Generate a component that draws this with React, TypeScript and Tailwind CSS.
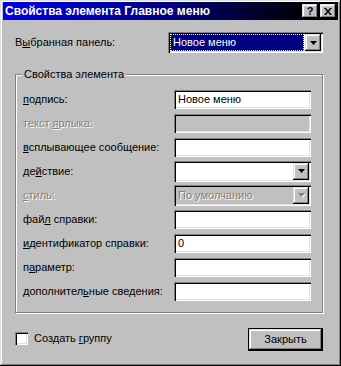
import React from 'react';

const raised = 'shadow-[inset_-1px_-1px_#000,inset_1px_1px_#dfdfdf,inset_-2px_-2px_#808080,inset_2px_2px_#fff]';
const sunken = 'shadow-[inset_1px_1px_#808080,inset_2px_2px_#000,inset_-1px_-1px_#fff,inset_-2px_-2px_#dfdfdf]';
const font = { fontFamily: '"Liberation Sans", Arial, sans-serif' };

interface LabelProps {
    pre: string;
    u: string;
    post: string;
    disabled?: boolean;
}

function Label({ pre, u, post, disabled }: LabelProps) {
    return (
        <span className={`whitespace-pre text-[11px] leading-[13px] ${disabled ? 'text-[#808080] [text-shadow:1px_1px_0_#fff]' : 'text-black'}`}>
            {pre}<u className="underline-offset-[1px]">{u}</u>{post}
        </span>
    );
}

function Arrow({ disabled }: { disabled?: boolean }) {
    return (
        <svg width="7" height="4" viewBox="0 0 7 4" className={disabled ? 'drop-shadow-[1px_1px_0_#fff]' : ''}>
            <path d="M0 0h7L3.5 4z" fill={disabled ? '#808080' : '#000'} />
        </svg>
    );
}

function DropButton({ disabled }: { disabled?: boolean }) {
    return (
        <div className={`w-[16px] h-full bg-[#c0c0c0] flex items-center justify-center ${raised}`}>
            <Arrow disabled={disabled} />
        </div>
    );
}

type Row = {
    pre: string;
    u: string;
    post: string;
    disabled?: boolean;
    combo?: boolean;
    value?: string;
};

const rows: Row[] = [
    { pre: '', u: 'п', post: 'одпись:', value: 'Новое меню' },
    { pre: 'текст ', u: 'я', post: 'рлыка:', disabled: true },
    { pre: '', u: 'в', post: 'сплывающее сообщение:' },
    { pre: 'де', u: 'й', post: 'ствие:', combo: true },
    { pre: '', u: 'с', post: 'тиль:', disabled: true, combo: true, value: 'По умолчанию' },
    { pre: 'фай', u: 'л', post: ' справки:' },
    { pre: '', u: 'и', post: 'дентификатор справки:', value: '0' },
    { pre: 'п', u: 'а', post: 'раметр:' },
    { pre: 'дополнител', u: 'ь', post: 'ные сведения:' },
];

function Field({ row }: { row: Row }) {
    if (row.combo) {
        return (
            <div className={`w-[137px] h-[21px] p-[2px] flex ${sunken} ${row.disabled ? 'bg-[#c0c0c0]' : 'bg-white'}`}>
                <div className={`flex-1 pl-[2px] flex items-center text-[11px] ${row.disabled ? 'text-[#808080] [text-shadow:1px_1px_0_#fff]' : 'text-black'}`}>
                    {row.value}
                </div>
                <DropButton disabled={row.disabled} />
            </div>
        );
    }
    return (
        <div className={`w-[137px] h-[19px] px-[4px] flex items-center text-[11px] text-black ${sunken} ${row.disabled ? 'bg-[#c0c0c0]' : 'bg-white'}`}>
            {row.value}
        </div>
    );
}

export default function App() {
    return (
        <div className={`w-[341px] h-[366px] bg-[#c0c0c0] pt-[2px] pl-[3px] pr-[3px] flex flex-col ${raised}`} style={font}>
            {/* Title bar */}
            <div className="h-[18px] bg-linear-to-r from-[#0000e8] via-[#000080] to-black flex items-center pl-[2px] pr-[2px]">
                <span className="flex-1 text-white font-bold text-[12px] leading-none">Свойства элемента Главное меню</span>
                <div className="flex gap-[2px]">
                    <div className={`w-[16px] h-[14px] bg-[#c0c0c0] flex items-center justify-center text-[11px] font-bold leading-none text-black ${raised}`}>?</div>
                    <div className={`w-[16px] h-[14px] bg-[#c0c0c0] flex items-center justify-center ${raised}`}>
                        <svg width="8" height="7" viewBox="0 0 8 7">
                            <path d="M0 0h2l2 2.5L6 0h2L5 3.5 8 7H6L4 4.5 2 7H0l3-3.5z" fill="#000" />
                        </svg>
                    </div>
                </div>
            </div>

            {/* Body */}
            <div className="flex-1 pt-[12px] pl-[12px] pr-[15px] flex flex-col">
                <div className="flex items-center justify-between h-[21px]">
                    <Label pre="В" u="ы" post="бранная панель:" />
                    <div className={`w-[155px] h-[21px] p-[2px] flex bg-white ${sunken}`}>
                        <div className="flex-1 pr-[1px]">
                            <div className="h-full bg-[#000080] border border-dotted border-[#ffff9c] flex items-center pl-[2px] text-[11px] text-white">
                                Новое меню
                            </div>
                        </div>
                        <DropButton />
                    </div>
                </div>

                {/* Group box */}
                <div className="relative mt-[21px] border border-[#808080] shadow-[inset_1px_1px_#fff,1px_1px_#fff] pt-[12px] pb-[9px] pl-[7px] pr-[11px]">
                    <span className="absolute -top-[7px] left-[6px] px-[2px] bg-[#c0c0c0] text-[11px] leading-[13px] text-black">Свойства элемента</span>
                    {rows.map((r, i) => (
                        <div key={i} className="h-[24px] flex items-center justify-between">
                            <Label pre={r.pre} u={r.u} post={r.post} disabled={r.disabled} />
                            <Field row={r} />
                        </div>
                    ))}
                </div>

                {/* Footer */}
                <div className="mt-[15px] flex items-start justify-between">
                    <div className="flex items-center gap-[6px] mt-[4px]">
                        <div className={`w-[13px] h-[13px] bg-white ${sunken}`} />
                        <Label pre="Создать " u="г" post="руппу" />
                    </div>
                    <div className="w-[75px] h-[23px] border border-black">
                        <div className={`w-full h-full bg-[#c0c0c0] flex items-center justify-center text-[11px] text-black ${raised}`}>
                            Закрыть
                        </div>
                    </div>
                </div>
            </div>
        </div>
    );
}
